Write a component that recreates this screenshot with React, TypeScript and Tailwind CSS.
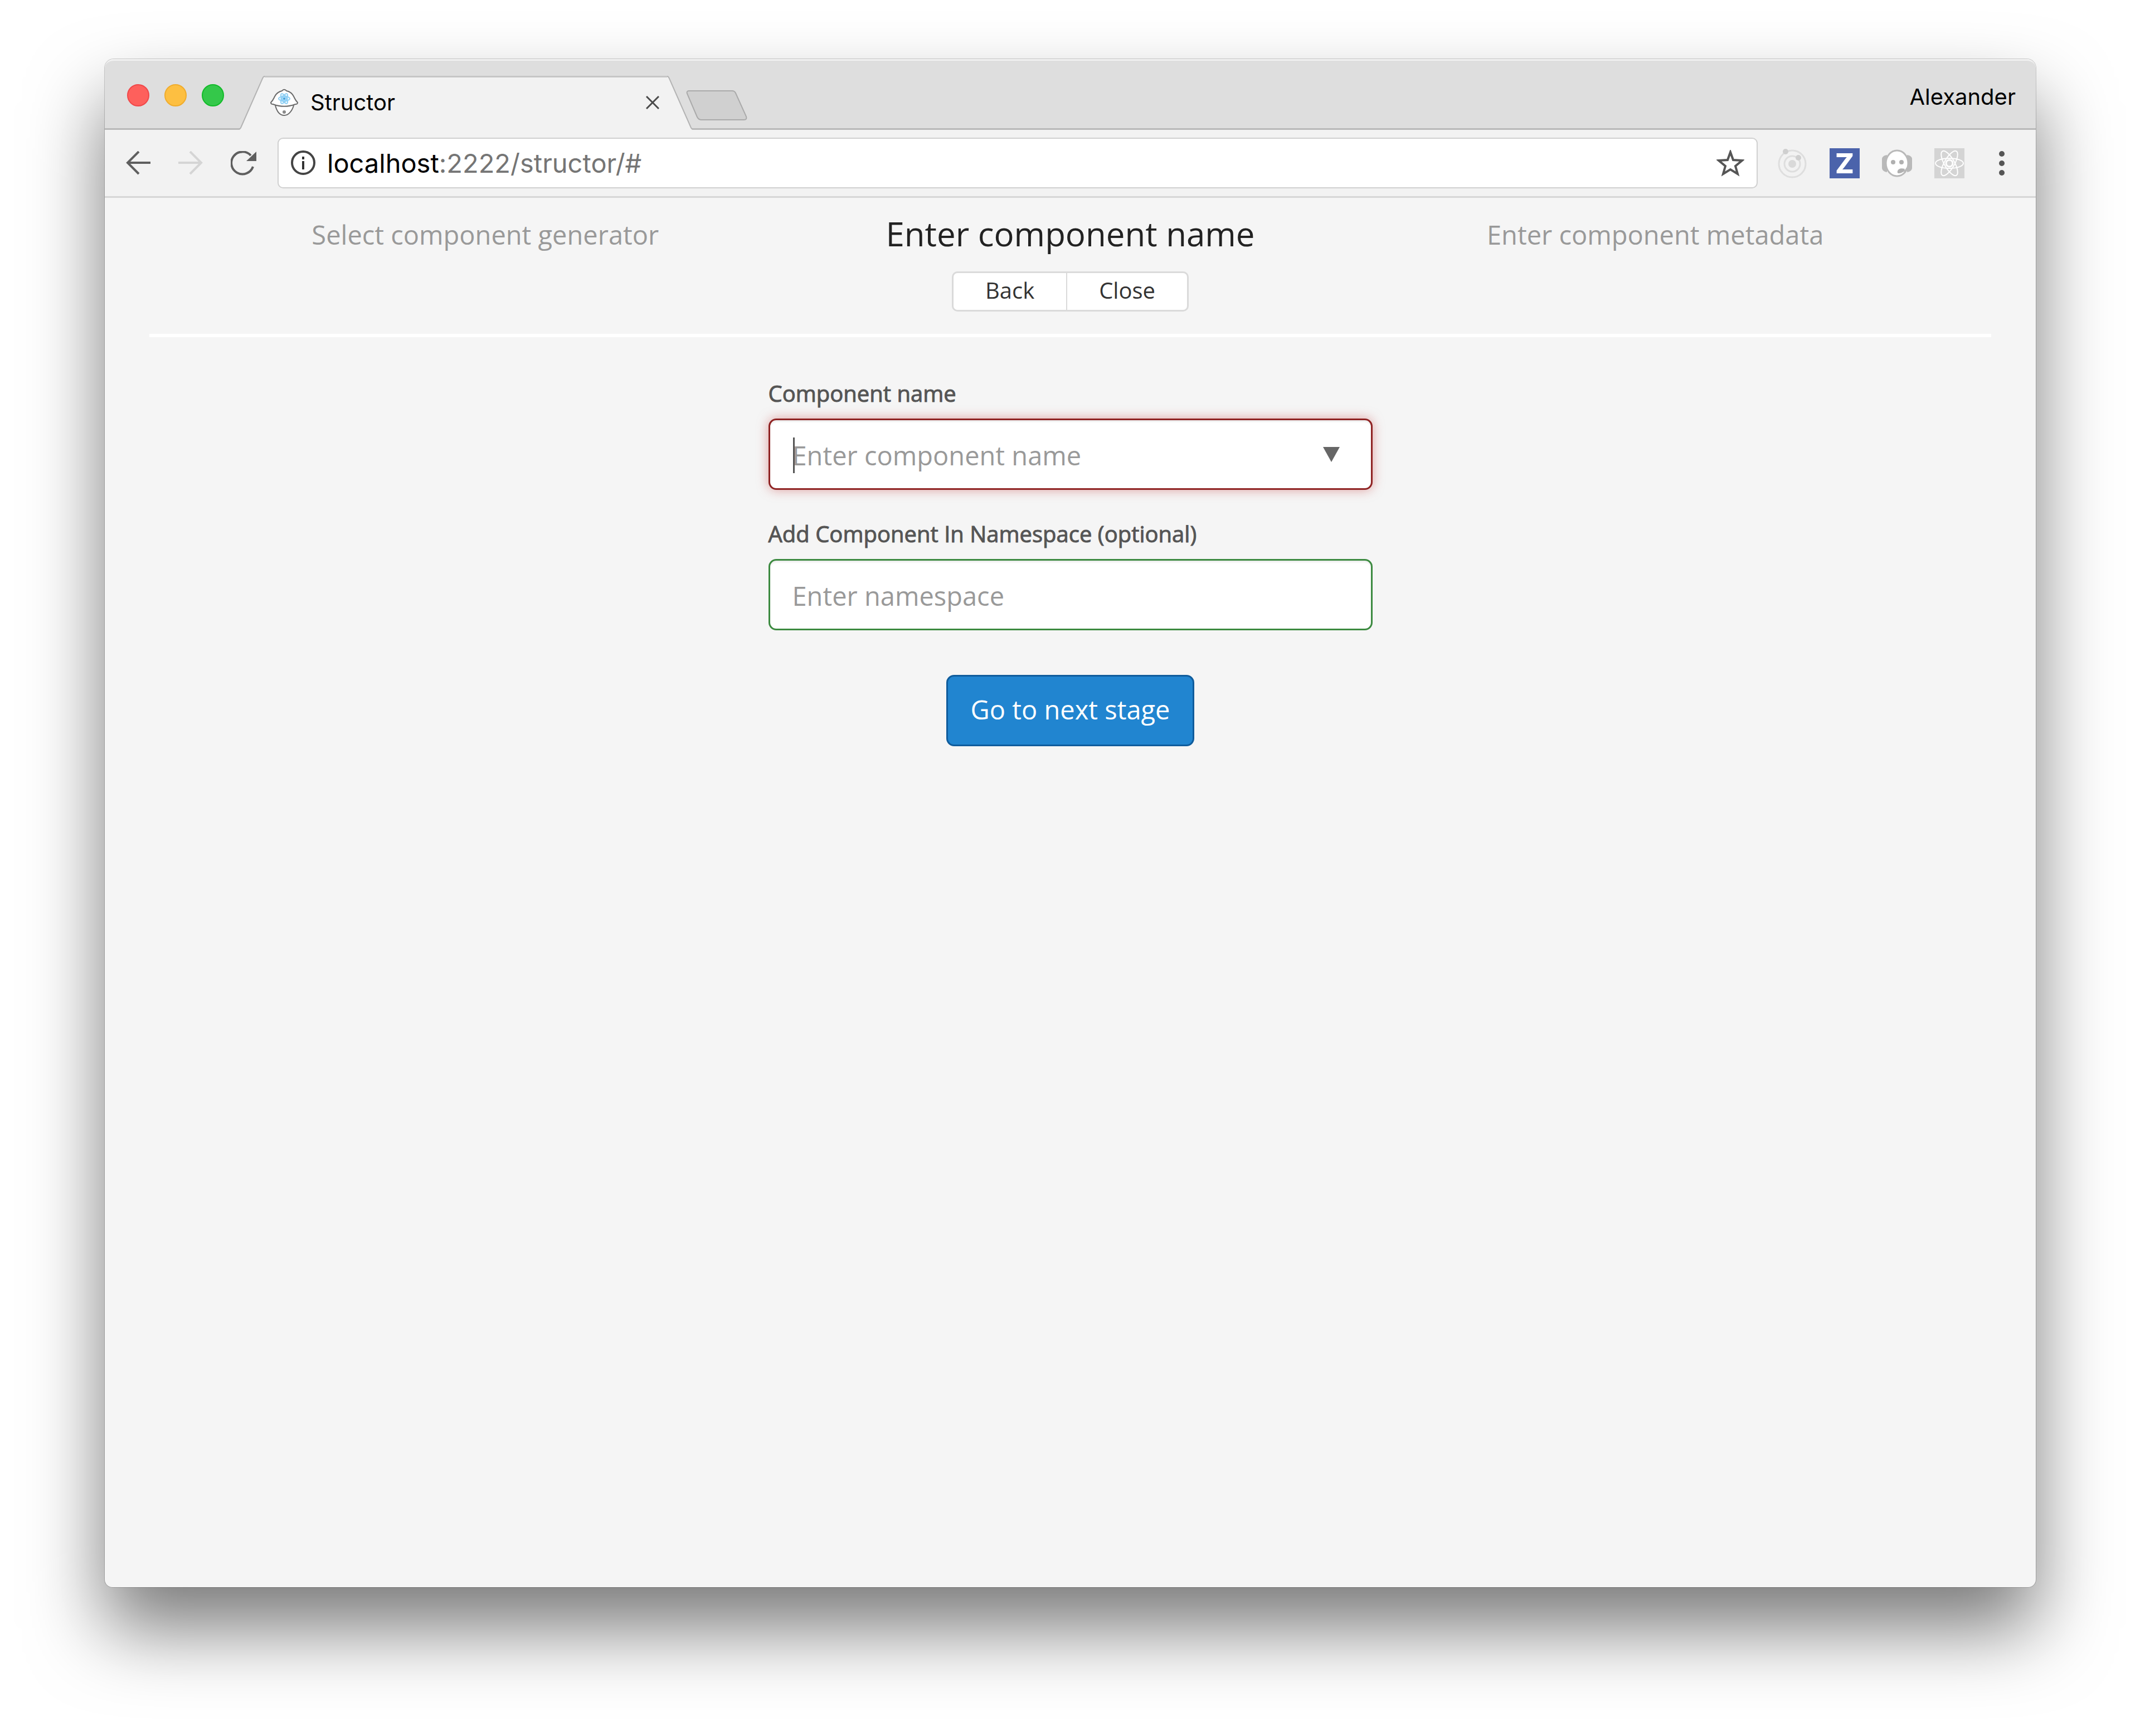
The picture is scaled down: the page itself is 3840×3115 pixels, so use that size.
import { useState, FormEvent, ReactNode } from 'react';

function Favicon() {
    return (
        <svg width="50" height="50" viewBox="0 0 50 50" fill="none" stroke="#6b6b6b" strokeWidth="2">
            <path d="M9 30c3 12 9 18 16 18s14-7 17-18" fill="#fff" />
            <path
                d="M1 25c4-4 5-7 7-11C11 8 17 5 21 4c2-3 6-3 8 0 5 1 10 4 13 10 2 4 3 7 7 11 0 2-2 3-4 3-13 5-27 5-40 0-2 0-4-1-4-3z"
                fill="#fff"
            />
            <circle cx="25" cy="18" r="7" fill="#b5dff7" stroke="none" />
            <g stroke="#8fd0f5" strokeWidth="2">
                <ellipse cx="25" cy="18" rx="10" ry="4" />
                <ellipse cx="25" cy="18" rx="10" ry="4" transform="rotate(60 25 18)" />
                <ellipse cx="25" cy="18" rx="10" ry="4" transform="rotate(120 25 18)" />
            </g>
            <circle cx="25" cy="18" r="2" fill="#3f9fdc" stroke="none" />
            <circle cx="25" cy="42" r="3" fill="#8a8a8a" stroke="none" />
        </svg>
    );
}

function OrbitIcon() {
    return (
        <svg width="54" height="54" viewBox="0 0 54 54" fill="none" stroke="#dedede" strokeWidth="3">
            <circle cx="27" cy="28" r="24" />
            <circle cx="27" cy="28" r="14" />
            <circle cx="27" cy="28" r="7" fill="#d9d9d9" stroke="none" />
            <circle cx="15" cy="6" r="5" fill="#cfcfcf" stroke="none" />
            <circle cx="38" cy="17" r="5" fill="#cfcfcf" stroke="none" />
        </svg>
    );
}

function HeadsetIcon() {
    return (
        <svg width="54" height="54" viewBox="0 0 54 54" fill="none">
            <path d="M9 12C3 13 0 16 0 19v16c0 4 3 7 9 8zM45 12c6 1 9 4 9 7v16c0 4-3 7-9 8z" fill="#b9b9b9" />
            <ellipse cx="27" cy="27" rx="20" ry="23" fill="#fff" stroke="#b9b9b9" strokeWidth="3" />
            <circle cx="20" cy="25" r="4" fill="#b0b0b0" />
            <circle cx="35" cy="25" r="4" fill="#b0b0b0" />
            <path d="M45 35c-1 4-4 6-8 6" stroke="#b9b9b9" strokeWidth="3" />
            <path d="M28 41c1-4 6-6 13-4-2 5-5 8-11 8-2 0-3-2-2-4z" fill="#b0b0b0" />
        </svg>
    );
}

function ReactIcon() {
    return (
        <svg width="54" height="54" viewBox="0 0 54 54" fill="none" stroke="#fff" strokeWidth="2">
            <rect width="54" height="54" fill="#d4d4d4" stroke="none" />
            <ellipse cx="27" cy="27" rx="25" ry="9" />
            <ellipse cx="27" cy="27" rx="25" ry="9" transform="rotate(60 27 27)" />
            <ellipse cx="27" cy="27" rx="25" ry="9" transform="rotate(120 27 27)" />
            <circle cx="27" cy="27" r="6" fill="#d4d4d4" strokeWidth="3" />
        </svg>
    );
}

function TabStrip() {
    return (
        <div className="flex items-center rounded-t-[16px] border-y-3 border-t-[#f1f1f1] border-b-[#b9b9b9] bg-[#dedede] h-[127px] pl-10 pr-9">
            <div className="flex gap-[27px] pt-0.5">
                <span className="size-10 rounded-full border-2 border-[#f0484a] bg-[#fe605c]" />
                <span className="size-10 rounded-full border-2 border-[#f0ac2c] bg-[#fdbf41]" />
                <span className="size-10 rounded-full border-2 border-[#12bb29] bg-[#34c84a]" />
            </div>

            <div className="ml-[27px] -mb-[3px] flex h-[97px] self-end">
                <svg width="46" height="97" viewBox="0 0 46 97" fill="none">
                    <path d="M0 97C3 96 3 94 4 92L42 5c1-3 2-4 4-4v96z" fill="#f2f2f2" />
                    <path d="M0 96C3 95 3 93 4 91L42 5c1-3 2-4 4-4" stroke="#b3b3b3" strokeWidth="2" />
                </svg>
                <div className="flex w-[722px] items-center border-t-3 border-[#c6c6c6] bg-[#f2f2f2] pb-1 pl-2.5 pr-[14px]">
                    <Favicon />
                    <span className="ml-[22px] flex-1 text-[40px] leading-[48px] text-black">Structor</span>
                    <button type="button" aria-label="Close tab">
                        <svg width="24" height="24" viewBox="0 0 24 24" stroke="#4a4a4a" strokeWidth="3">
                            <path d="M1 1l22 22M23 1L1 23" />
                        </svg>
                    </button>
                </div>
                <svg width="46" height="97" viewBox="0 0 46 97" fill="none">
                    <path d="M46 97c-3-1-3-3-4-5L4 5C3 2 2 1 0 1v96z" fill="#f2f2f2" />
                    <path d="M46 96c-3-1-3-3-4-5L4 5C3 2 2 1 0 1" stroke="#b3b3b3" strokeWidth="2" />
                </svg>
            </div>
            <button type="button" aria-label="New tab" className="-ml-3 mb-[14px] self-end">
                <svg width="110" height="54" viewBox="0 0 110 54" className="block">
                    <path
                        d="M5 1h78c4 0 5 2 6 4l19 42c1 4 0 6-4 6H28c-4 0-6-1-8-5L2 6C1 3 2 1 5 1z"
                        fill="#d0d0d0"
                        stroke="#aaa"
                        strokeWidth="2"
                    />
                </svg>
            </button>

            <span className="ml-auto pt-2 text-[40px] leading-[48px] text-black">Alexander</span>
        </div>
    );
}

function Toolbar() {
    return (
        <div className="flex items-center border-b-3 border-[#d6d6d6] bg-[#f2f2f2] py-[14px] pl-[38px] pr-[55px]">
            <div className="flex items-center gap-[50px]">
                <button type="button" aria-label="Back in history">
                    <svg width="44" height="44" viewBox="0 0 44 44" fill="none" stroke="#5f5f5f" strokeWidth="4">
                        <path d="M44 21H3M23 1L3 21l20 20" />
                    </svg>
                </button>
                <button type="button" aria-label="Forward in history">
                    <svg width="44" height="44" viewBox="0 0 44 44" fill="none" stroke="#d5d5d5" strokeWidth="4">
                        <path d="M0 21h41M21 1l20 20-20 20" />
                    </svg>
                </button>
                <button type="button" aria-label="Reload">
                    <svg width="46" height="44" viewBox="0 0 46 44" fill="none">
                        <path d="M36 8A20 20 0 1 0 40 28" stroke="#5f5f5f" strokeWidth="4" />
                        <path d="M46 1v17H28z" fill="#5f5f5f" />
                    </svg>
                </button>
            </div>

            <div className="ml-[38px] flex h-[91px] flex-1 items-center rounded-[10px] border-2 border-[#d0d0d0] bg-white pl-[21px] pr-[22px]">
                <svg width="45" height="45" viewBox="0 0 45 45" fill="none">
                    <circle cx="23" cy="22" r="20" stroke="#444" strokeWidth="4" />
                    <path d="M23 19v15M23 11v5" stroke="#333" strokeWidth="4" />
                </svg>
                <span className="ml-[21px] flex-1 text-[47px] leading-[56px] text-[#757575]">
                    <span className="text-black">localhost</span>:2222/structor/#
                </span>
                <button type="button" aria-label="Bookmark this page">
                    <svg width="50" height="48" viewBox="0 0 50 48" fill="none" stroke="#555" strokeWidth="4">
                        <path d="M25 4l5 14 16 1-12 10 4 14-13-8-13 8 4-14L4 19l16-1z" />
                    </svg>
                </button>
            </div>

            <div className="ml-[35px] flex items-center gap-10">
                <OrbitIcon />
                <span className="flex size-[54px] items-center justify-center bg-[#4b63ab] text-[50px] font-extrabold leading-[54px] text-white">
                    Z
                </span>
                <HeadsetIcon />
                <ReactIcon />
            </div>
            <button type="button" aria-label="Menu" className="ml-[61px]">
                <svg width="12" height="46" viewBox="0 0 12 46" fill="#555">
                    <circle cx="6" cy="6" r="5" />
                    <circle cx="6" cy="23" r="5" />
                    <circle cx="6" cy="40" r="5" />
                </svg>
            </button>
        </div>
    );
}

function Field({ id, label, children }: { id: string; label: string; children: ReactNode }) {
    return (
        <div className="flex flex-col gap-[18px]">
            <label htmlFor={id} className="text-[40px] leading-[54px] text-[#555] [-webkit-text-stroke:1px_#555]">
                {label}
            </label>
            {children}
        </div>
    );
}

export default function App() {
    const [name, setName] = useState('');
    const [namespace, setNamespace] = useState('');

    const handleSubmit = (e: FormEvent) => {
        e.preventDefault();
    };

    return (
        <div className="flex min-h-screen flex-col bg-white pb-[267px] pl-[188px] pr-[187px] pt-[106px] font-['Inter',sans-serif]">
            <div className="flex flex-1 flex-col rounded-t-[16px] rounded-b-[14px] bg-[#f5f5f5] shadow-[0_0_0_1px_rgba(0,0,0,0.18),0_75px_135px_rgba(0,0,0,0.52)]">
                <TabStrip />
                <Toolbar />

                <main className="px-20 pt-[31px] font-['Open_Sans',sans-serif]">
                    <header className="grid grid-cols-3 border-b-6 border-white px-[78px] pb-10 text-center">
                        <p className="text-[47px] leading-[70px] text-[#999]">Select component generator</p>
                        <div>
                            <h1 className="text-[60px] leading-[66px] text-[#222]">Enter component name</h1>
                            <div className="mt-[35px] inline-flex h-[72px] rounded-[10px] border-3 border-[#dadada] bg-white text-[40px] leading-[54px] text-[#333]">
                                <button type="button" className="border-r-2 border-[#dadada] px-[57px] pb-1">
                                    Back
                                </button>
                                <button type="button" className="px-[57px] pb-1">
                                    Close
                                </button>
                            </div>
                        </div>
                        <p className="text-[47px] leading-[70px] text-[#999]">Enter component metadata</p>
                    </header>

                    <form onSubmit={handleSubmit} className="mx-auto mt-[74px] flex w-[1084px] flex-col gap-[52px]">
                        <Field id="component-name" label="Component name">
                            <div className="relative">
                                <input
                                    id="component-name"
                                    type="text"
                                    value={name}
                                    onChange={(e) => setName(e.target.value)}
                                    placeholder="Enter component name"
                                    className="block h-32 w-full rounded-[14px] border-3 border-[#8f2323] bg-white pl-10 pr-28 pt-1 text-[47px] text-[#555] shadow-[inset_0_3px_3px_rgba(0,0,0,0.075),0_0_20px_rgba(206,100,100,0.6)] outline-none placeholder:text-[#999]"
                                />
                                {!name && <span className="absolute left-11 top-[34px] h-16 w-[3px] bg-[#555]" />}
                                <button type="button" aria-label="Show names" className="absolute right-[58px] top-[51px]">
                                    <svg width="32" height="27" viewBox="0 0 32 27" className="block">
                                        <path d="M1 0h30L16 27z" fill="#666" />
                                    </svg>
                                </button>
                            </div>
                        </Field>

                        <Field id="namespace" label="Add Component In Namespace (optional)">
                            <input
                                id="namespace"
                                type="text"
                                value={namespace}
                                onChange={(e) => setNamespace(e.target.value)}
                                placeholder="Enter namespace"
                                className="block h-32 w-full rounded-[14px] border-3 border-[#3c8a40] bg-white px-10 pt-1 text-[47px] text-[#555] shadow-[inset_0_3px_3px_rgba(0,0,0,0.075)] outline-none placeholder:text-[#999]"
                            />
                        </Field>

                        <button
                            type="submit"
                            className="mt-7 h-32 self-center rounded-[14px] border-3 border-[#0f5c9c] bg-[#2185d0] px-[41px] pb-1 text-[47px] text-white"
                        >
                            Go to next stage
                        </button>
                    </form>
                </main>
            </div>
        </div>
    );
}
